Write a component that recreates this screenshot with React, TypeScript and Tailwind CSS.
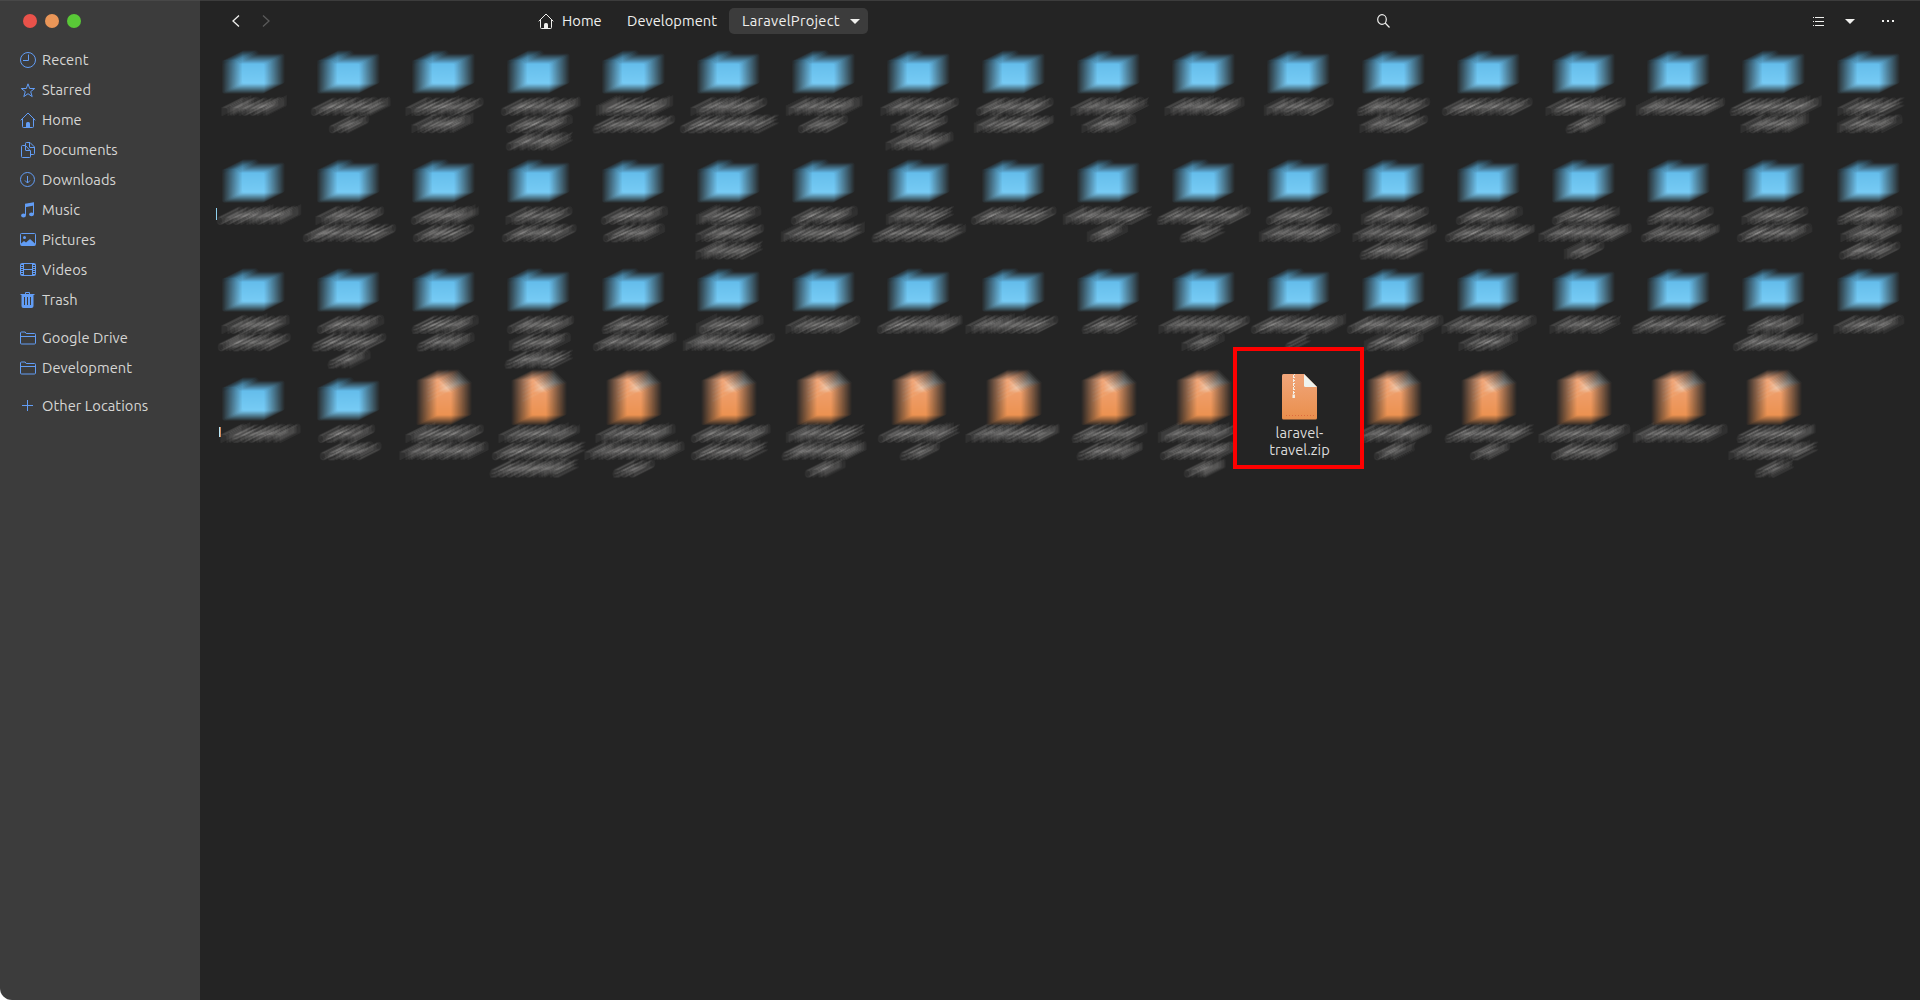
import type { ReactNode } from "react";

type Span = [number, number];
type Entry = { kind: "folder" | "file" | "zip"; lines: Span[] };

const folder = (...lines: Span[]): Entry => ({ kind: "folder", lines });
const file = (...lines: Span[]): Entry => ({ kind: "file", lines });

/* Horizontal extent of every obscured label line, relative to its cell. */
const entries: Entry[] = [
  folder([22, 88]),
  folder([16, 95], [34, 74]),
  folder([16, 95], [22, 86]),
  folder([16, 95], [21, 90], [21, 88]),
  folder([16, 95], [13, 95]),
  folder([16, 95], [5, 104]),
  folder([16, 95], [28, 81]),
  folder([16, 95], [26, 83], [21, 88]),
  folder([16, 94], [14, 94]),
  folder([16, 94], [27, 83]),
  folder([15, 94]),
  folder([19, 90]),
  folder([17, 93], [20, 89]),
  folder([7, 100]),
  folder([16, 96], [36, 75]),
  folder([11, 100]),
  folder([10, 102], [21, 90]),
  folder([23, 90], [22, 89]),

  folder([17, 102]),
  folder([21, 89], [8, 101]),
  folder([21, 89], [23, 87]),
  folder([21, 89], [17, 93]),
  folder([21, 89], [23, 86]),
  folder([21, 88], [21, 89], [21, 88]),
  folder([21, 89], [11, 97]),
  folder([21, 89], [7, 101]),
  folder([11, 99]),
  folder([8, 100], [32, 74]),
  folder([7, 102], [30, 77]),
  folder([21, 89], [14, 95]),
  folder([21, 89], [13, 97], [20, 89]),
  folder([21, 89], [10, 100]),
  folder([22, 90], [9, 101], [34, 75]),
  folder([22, 90], [16, 95]),
  folder([22, 90], [17, 93]),
  folder([22, 90], [26, 87], [24, 88]),

  folder([22, 89], [18, 91]),
  folder([22, 89], [17, 94], [33, 75]),
  folder([22, 89], [27, 84]),
  folder([22, 89], [24, 86], [20, 88]),
  folder([22, 89], [13, 96]),
  folder([21, 88], [8, 100]),
  folder([16, 93]),
  folder([12, 97]),
  folder([6, 99]),
  folder([27, 83]),
  folder([9, 100], [32, 76]),
  folder([6, 102], [40, 68]),
  folder([7, 103], [24, 83]),
  folder([7, 102], [24, 83]),
  folder([20, 91]),
  folder([7, 103]),
  folder([27, 85], [13, 98]),
  folder([19, 91]),

  folder([21, 100]),
  folder([23, 80], [25, 88]),
  file([16, 95], [10, 98]),
  file([14, 95], [7, 102], [5, 95]),
  file([16, 95], [5, 104], [33, 76]),
  file([16, 95], [16, 93]),
  file([16, 95], [12, 96], [35, 75]),
  file([13, 95], [35, 75]),
  file([6, 99]),
  file([17, 94], [22, 88]),
  file([8, 90], [10, 90], [34, 75]),
  { kind: "zip", lines: [] },
  file([14, 92], [34, 75]),
  file([10, 99], [35, 75]),
  file([9, 101], [21, 88]),
  file([8, 102]),
  file([17, 95], [9, 100], [35, 74]),
];

function Defs() {
  return (
    <svg className="absolute h-0 w-0">
      <defs>
        <linearGradient id="blue" x1="0" y1="0" x2="0" y2="1">
          <stop offset="0" stopColor="#5fb8e8" />
          <stop offset="1" stopColor="#7bcef7" />
        </linearGradient>
        <linearGradient id="orange" x1="0" y1="0" x2="0" y2="1">
          <stop offset="0" stopColor="#f0a57a" />
          <stop offset="1" stopColor="#ea8f4c" />
        </linearGradient>
        {/* Averages 21 copies, each one pixel further along a 2:1 diagonal. */}
        <filter
          id="smear"
          filterUnits="userSpaceOnUse"
          x="-15"
          y="-20"
          width="140"
          height="140"
          colorInterpolationFilters="sRGB"
        >
          <feOffset in="SourceGraphic" dx="1" dy="0" result="o1" />
          <feComposite in="SourceGraphic" in2="o1" operator="arithmetic" k2="0.5" k3="0.5" result="s2" />
          <feOffset in="s2" dx="2" dy="-1" result="o2" />
          <feComposite in="s2" in2="o2" operator="arithmetic" k2="0.5" k3="0.5" result="s4" />
          <feOffset in="s4" dx="4" dy="-2" result="o4" />
          <feComposite in="s4" in2="o4" operator="arithmetic" k2="0.5" k3="0.5" result="s8" />
          <feOffset in="s8" dx="8" dy="-4" result="o8" />
          <feComposite in="s8" in2="o8" operator="arithmetic" k2="0.5" k3="0.5" result="s16" />
          <feOffset in="s4" dx="16" dy="-8" result="t4" />
          <feComposite in="s16" in2="t4" operator="arithmetic" k2="0.8" k3="0.2" result="s20" />
          <feOffset in="SourceGraphic" dx="20" dy="-10" result="t1" />
          <feComposite in="s20" in2="t1" operator="arithmetic" k2="0.952" k3="0.048" />
        </filter>
      </defs>
    </svg>
  );
}

function FolderShape() {
  return (
    <g>
      <path d="M22 12v-.5q0-1.500 1.500-1.500h12q1.500 0 2.500 1.500l1.500 2.500v6H22z" fill="#4a9cc8" />
      <path d="M22 15.500q0-2 2-2h38.500q2 0 2 2v26q0 2-2 2H24q-2 0-2-2z" fill="url(#blue)" />
    </g>
  );
}

function FileShape({ zipper = false }: { zipper?: boolean }) {
  return (
    <g>
      <path d="M1.500 0H22L35 13V44q0 1.500-1.500 1.500h-32Q0 45.500 0 44V1.500Q0 0 1.500 0z" fill="url(#orange)" />
      <path d="M22 0 35 13H23.500q-1.500 0-1.500-1.500z" fill="#eff3ee" />
      {zipper && (
        <g>
          <path d="M11.500 1v20" stroke="#f4f1ea" strokeWidth="1" strokeDasharray="3 1" />
          <path d="M12.500 0v20" stroke="#f4f1ea" strokeWidth="1" strokeDasharray="1 2" />
          <rect x="10.500" y="20.500" width="2.400" height="3.500" fill="#f4f1ea" />
          <path d="M4 41.500h28" stroke="#dd6a3f" strokeWidth="1" strokeDasharray="1 2" />
        </g>
      )}
      {!zipper && <path d="M11.500 0v24" stroke="#e4d3c6" strokeWidth="2" strokeDasharray="2 2" />}
    </g>
  );
}

/* Letter-like marks that give the smear filter something to drag out. */
function Marks({ span, line, seed }: { span: Span; line: number; seed: number }) {
  const base = 65.7 + line * 17.4;
  const end = span[1] - 20;
  const out: ReactNode[] = [];
  let s = seed * 7919 + line * 131 + span[0] * 17 + 11;
  let x = span[0];
  let i = 0;
  while (x < end - 1) {
    s = (s * 1103515245 + 12345) % 2147483648;
    const r = Math.floor(s / 65536) % 6;
    const w = Math.min(6, end - x);
    if (r < 2) {
      out.push(<ellipse key={i} cx={x + w / 2} cy={base - 4} rx={w / 2 - 0.4} ry="3.600" />);
      x += w + 2;
    } else if (r < 4) {
      out.push(<path key={i} d={`M${x} ${base}v-8q${w} -1.500 ${w} 3v5`} />);
      x += w + 2.2;
    } else if (r === 4) {
      out.push(<path key={i} d={`M${x + 0.5} ${base}v-10.500`} />);
      x += 3.2;
    } else {
      out.push(<path key={i} d={`M${x + w} ${base - 0.4}h-${w - 1}q-2-4 1-7.500h${w - 2}M${x} ${base - 4}h${w - 1}`} />);
      x += w + 2;
    }
    i += 1;
  }
  return <>{out}</>;
}

function Cell({ entry, index }: { entry: Entry; index: number }) {
  if (entry.kind === "zip") {
    return (
      <div className="relative z-10 h-[109px] w-[95px]">
        <div className="absolute -left-3 -top-[30px] h-[122px] w-[131px] border-4 border-[#fe0000] bg-[#242424]" />
        <div className="relative flex w-[110px] flex-col items-center">
          <svg className="-ml-[2px] -mt-[3px] h-[46px] w-[35px]" viewBox="0 0 35 46">
            <FileShape zipper />
          </svg>
          <div className="mt-[3.500px] -ml-px text-center leading-[17px] text-[#dcdcdc]">
            laravel-
            <br />
            travel.zip
          </div>
        </div>
      </div>
    );
  }
  return (
    <div className="h-[109px] w-[95px]">
      <svg className="h-[109px] w-[95px] overflow-visible" viewBox="0 0 95 109">
        <g filter="url(#smear)">
          {entry.kind === "folder" ? (
            <FolderShape />
          ) : (
            <g transform="translate(26.500 2.500)">
              <FileShape />
            </g>
          )}
          <g fill="none" stroke="#d8d6d4" strokeWidth="1.500">
            {entry.lines.map((span, line) => (
              <Marks key={line} span={span} line={line} seed={index} />
            ))}
          </g>
        </g>
        {index === 18 && <rect x="16" y="49" width="1" height="12" fill="#8fd0ee" />}
        {index === 54 && (
          <g>
            <rect x="19" y="50" width="1" height="10" fill="#b8e4f4" />
            <rect x="20" y="50" width="1" height="10" fill="#d58a5a" />
          </g>
        )}
      </svg>
    </div>
  );
}

function Icon({ children }: { children: ReactNode }) {
  return (
    <svg className="h-4 w-4 shrink-0" viewBox="0 0 16 16" fill="none" stroke="currentColor" strokeWidth="1">
      {children}
    </svg>
  );
}

const homeIcon = (
  <Icon>
    <path d="M.7 8.300 8 1l7.300 7.300M2.500 7v7.500q0 1 1 1h9q1 0 1-1V7" />
    <path d="M6 15.500v-4q0-1.500 1.500-1.500h1q1.500 0 1.500 1.500v4z" fill="currentColor" stroke="none" />
  </Icon>
);

const folderIcon = (
  <Icon>
    <path d="M.5 3q0-1 1-1h3.700l1 1.500h8.300q1 0 1 1V13q0 1-1 1h-13q-1 0-1-1zM.5 6.500h15" />
  </Icon>
);

const groups: { label: string; icon: ReactNode }[][] = [
  [
    {
      label: "Recent",
      icon: (
        <Icon>
          <circle cx="8" cy="8" r="7.500" />
          <path d="M8.500 2.500v6H3" />
        </Icon>
      ),
    },
    {
      label: "Starred",
      icon: (
        <Icon>
          <path d="m8 1.800 1.700 4.700h5l-4 3.100 1.500 5L8 11.700l-4.200 2.900 1.500-5-4-3.100h5z" />
        </Icon>
      ),
    },
    { label: "Home", icon: homeIcon },
    {
      label: "Documents",
      icon: (
        <Icon>
          <path d="M5 3.500H2.500q-1 0-1 1v10q0 1 1 1h7q1 0 1-1V9L5.500 3.500V8q0 .5.5.5h4.500" />
          <path d="M5.500 3.500v-2q0-1 1-1H10l4.500 4.500v6.500q0 1-1 1h-3M9.500.5V5q0 .5.5.5h4.500" />
        </Icon>
      ),
    },
    {
      label: "Downloads",
      icon: (
        <Icon>
          <circle cx="7.500" cy="7.500" r="7" />
          <path d="M7.500 4v7M5 8.500l2.500 2.500L10 8.500" />
        </Icon>
      ),
    },
    {
      label: "Music",
      icon: (
        <Icon>
          <path d="M5.500 13V3l8-1.800V12" />
          <path d="M5 1.800 14 .2v3.300L5 5.200z" fill="currentColor" stroke="none" />
          <ellipse cx="3.500" cy="13.500" rx="2.400" ry="1.900" fill="currentColor" stroke="none" />
          <ellipse cx="11.500" cy="12.300" rx="2.400" ry="1.900" fill="currentColor" stroke="none" />
        </Icon>
      ),
    },
    {
      label: "Pictures",
      icon: (
        <Icon>
          <rect x=".5" y="1.500" width="15" height="12" rx="1" />
          <circle cx="4.500" cy="5.500" r="1.500" fill="currentColor" stroke="none" />
          <path d="M1 13.500v-2L4 9l2 1.500L10 7l5 4.500v2z" fill="currentColor" stroke="none" />
        </Icon>
      ),
    },
    {
      label: "Videos",
      icon: (
        <Icon>
          <rect x=".5" y="1.500" width="15" height="12" rx="1" />
          <path d="M3.500 1.500v12M12.500 1.500v12M3.500 7.500h9" />
          <path d="M2 2v11M14 2v11" strokeWidth="2" strokeDasharray="1 1" />
        </Icon>
      ),
    },
    {
      label: "Trash",
      icon: (
        <Icon>
          <path d="M.5 2.500h14M5.500 2V.5h4V2" />
          <path
            fillRule="evenodd"
            d="M1.500 3h12v11q0 2-2 2h-8q-2 0-2-2zM4 5v8h1V5zM7 5v8h1V5zM10 5v8h1V5z"
            fill="currentColor"
            stroke="none"
          />
        </Icon>
      ),
    },
  ],
  [
    { label: "Google Drive", icon: folderIcon },
    { label: "Development", icon: folderIcon },
  ],
  [
    {
      label: "Other Locations",
      icon: (
        <Icon>
          <path d="M7.500 2v11M2 7.500h11" />
        </Icon>
      ),
    },
  ],
];

function Sidebar() {
  return (
    <aside className="flex h-full w-[200px] flex-col rounded-bl-xl bg-[#3c3c3c] shadow-[inset_0_1px_0_#484848]">
      <div className="flex h-[45px] gap-2 pl-[23px] pt-[14px]">
        <span className="h-3.5 w-3.5 rounded-full bg-[#e9524a]" />
        <span className="h-3.5 w-3.5 rounded-full bg-[#ea9658]" />
        <span className="h-3.5 w-3.5 rounded-full bg-[#59c837]" />
      </div>
      <nav className="flex flex-col gap-2">
        {groups.map((group, g) => (
          <ul key={g}>
            {group.map((item) => (
              <li key={item.label} className="flex h-[30px] items-center gap-1.5 pl-5 text-[#629df5]">
                {item.icon}
                <span className="tracking-[0.05px] text-[#d6d6d4]">{item.label}</span>
              </li>
            ))}
          </ul>
        ))}
      </nav>
    </aside>
  );
}

function Header() {
  return (
    <header className="flex h-[50px] items-start pt-2 text-[#f0f0ee]">
      <div className="flex h-[26px] w-[338px] items-center gap-[22px] pl-8">
        <svg className="h-3 w-2" viewBox="0 0 8 12" fill="none" stroke="currentColor" strokeWidth="1.300">
          <path d="M7 .5 1 6l6 5.500" />
        </svg>
        <svg className="h-3 w-2 text-[#5a5a5a]" viewBox="0 0 8 12" fill="none" stroke="currentColor" strokeWidth="1.300">
          <path d="m1 .5 6 5.500-6 5.500" />
        </svg>
      </div>
      <div className="flex h-[26px] w-[839px] items-center tracking-[0.05px]">
        <div className="flex w-[89px] items-center gap-2">
          {homeIcon}
          <span>Home</span>
        </div>
        <span className="w-[102px]">Development</span>
        <button className="flex h-[26px] w-[139px] items-center justify-between rounded-[5px] bg-[#3c3c3c] pl-[13px] pr-2 tracking-[0.25px]">
          <span>LaravelProject</span>
          <svg className="h-[5px] w-2.5" viewBox="0 0 10 5" fill="currentColor">
            <path d="M0 0h10L5 5z" />
          </svg>
        </button>
      </div>
      <div className="flex h-[26px] flex-1 items-center">
        <svg className="h-3.5 w-3.5" viewBox="0 0 14 14" fill="none" stroke="currentColor" strokeWidth="1.200">
          <ellipse cx="5" cy="5.500" rx="4.300" ry="4.800" />
          <path d="m8.200 9 4.300 4.500" />
        </svg>
        <svg className="ml-[422px] h-[11px] w-[11px]" viewBox="0 0 11 11" stroke="currentColor">
          <path d="M2 1.500h9M2 5.500h9M2 9.500h9M0 1.500h1M0 5.500h1M0 9.500h1" />
        </svg>
        <svg className="ml-[21px] h-[5px] w-2.5" viewBox="0 0 10 5" fill="currentColor">
          <path d="M0 0h10L5 5z" />
        </svg>
        <svg className="ml-[27px] h-0.5 w-3" viewBox="0 0 12 2" fill="currentColor">
          <path d="M0 0h2v2H0zM5 0h2v2H5zM10 0h2v2h-2z" />
        </svg>
      </div>
    </header>
  );
}

export default function App() {
  return (
    <div className="h-[1000px] w-[1920px] overflow-hidden bg-white font-['Ubuntu','Noto_Sans',sans-serif] text-[14.667px] text-[#d6d6d4]">
      <Defs />
      <div className="flex h-full">
        <Sidebar />
        <main className="h-full w-[1720px] bg-[#242424] shadow-[inset_0_1px_0_#3c3c3c]">
          <Header />
          <div className="grid grid-cols-[repeat(18,95px)]">
            {entries.map((entry, i) => (
              <Cell key={i} entry={entry} index={i} />
            ))}
          </div>
        </main>
      </div>
    </div>
  );
}
